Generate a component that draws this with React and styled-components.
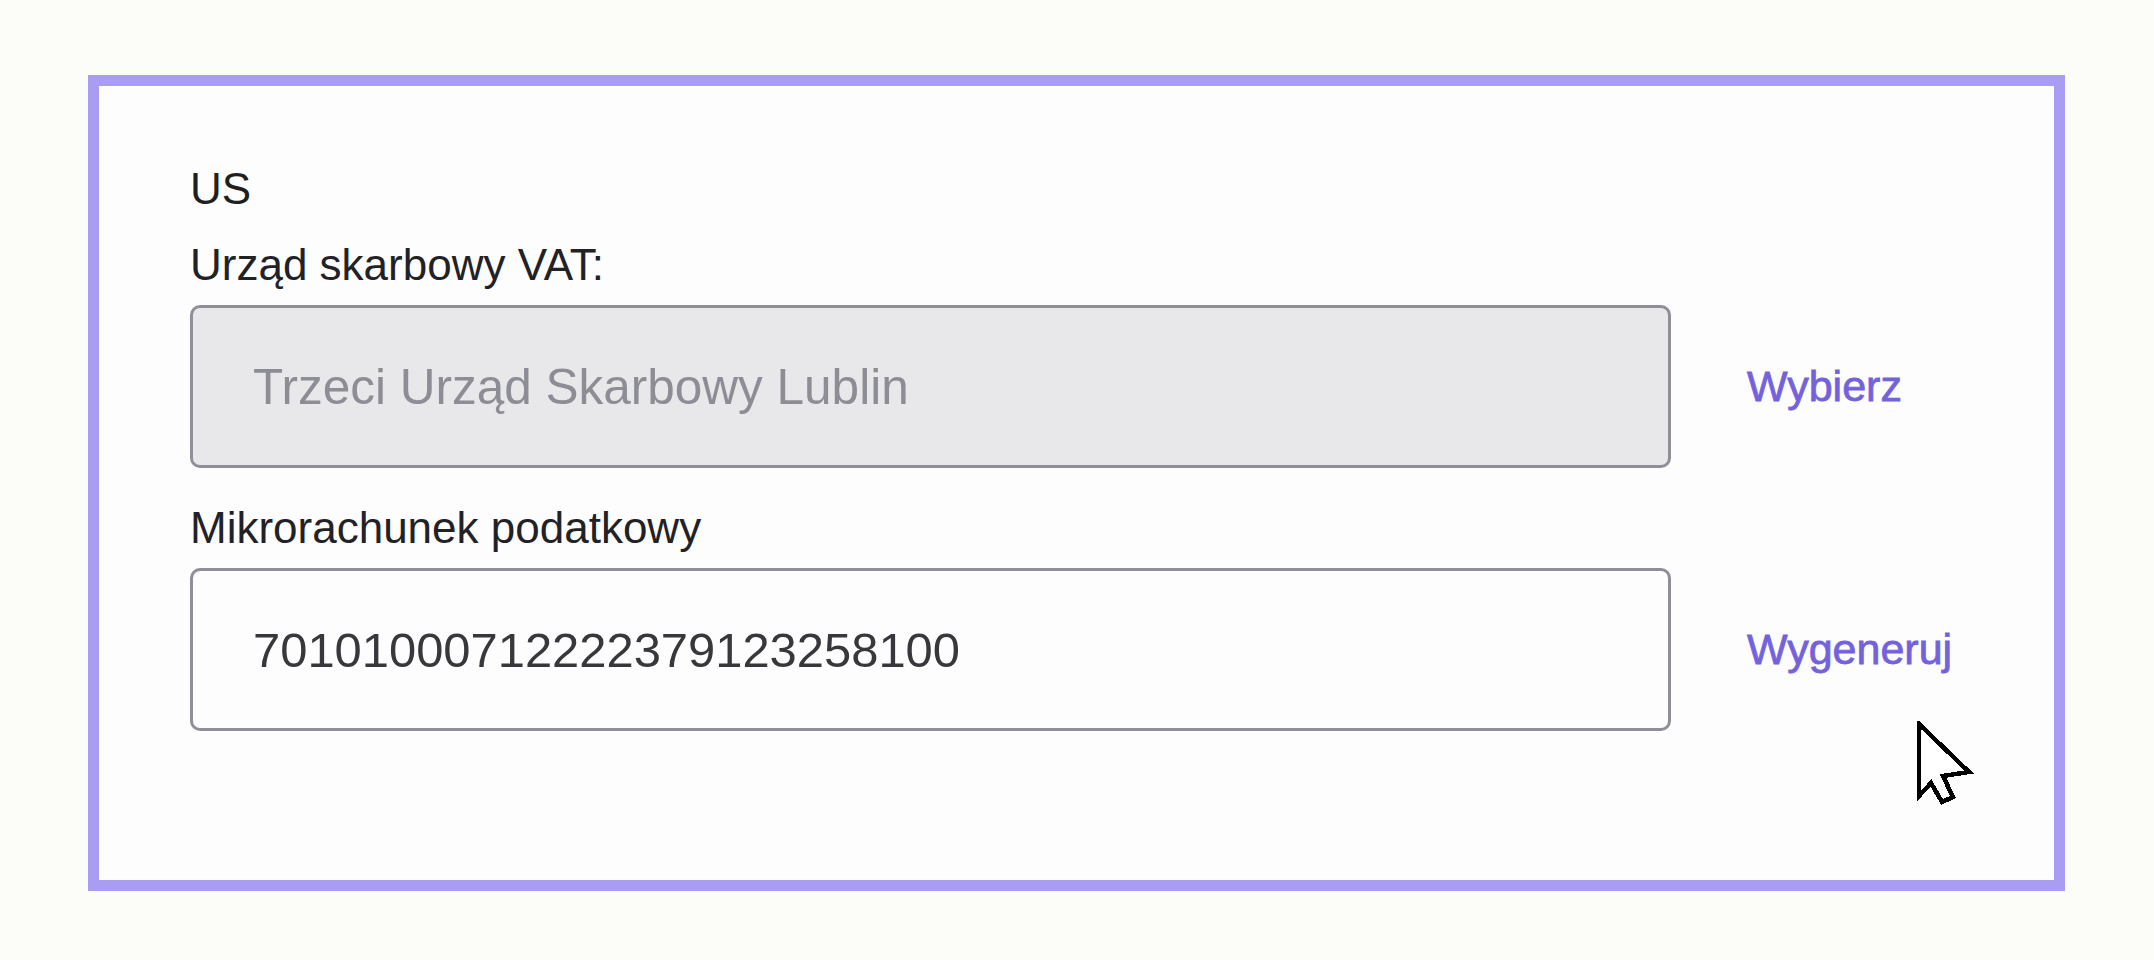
import React from 'react';
import styled, { createGlobalStyle } from 'styled-components';

const GlobalStyle = createGlobalStyle`
  body {
    margin: 0;
    background: #fcfcf9;
    font-family: 'Liberation Sans', Arial, sans-serif;
  }
`;

const Page = styled.div`
  padding: 75px 0 0 88px;
  min-height: 100vh;
  box-sizing: border-box;
`;

const Frame = styled.section`
  position: relative;
  width: 1977px;
  height: 816px;
  box-sizing: border-box;
  border: 11px solid #a99cf3;
  background: #fdfdfd;
  padding: 78px 0 0 91px;
`;

const Title = styled.h3`
  margin: 0 0 26px;
  font-size: 44px;
  line-height: 50px;
  font-weight: 400;
  color: #1f1f22;
`;

const Field = styled.div`
  margin-top: ${(p) => p.offset || 0}px;
`;

const Label = styled.div`
  font-size: 44px;
  line-height: 50px;
  color: #222226;
  margin-bottom: 15px;
`;

const Row = styled.div`
  display: flex;
  align-items: center;
`;

const InputBox = styled.div`
  width: 1481px;
  height: 163px;
  box-sizing: border-box;
  display: flex;
  align-items: center;
  padding-left: 60px;
  border: 3px solid #8f8f99;
  border-radius: 10px;
  background: ${(p) => (p.disabled ? '#e8e8ea' : '#fdfdfd')};
  color: ${(p) => (p.disabled ? '#8d8d95' : '#38383c')};
  font-size: ${(p) => (p.disabled ? 49.5 : 48.9)}px;
`;

const Action = styled.a`
  margin-left: 76px;
  font-size: 43px;
  font-weight: 400;
  -webkit-text-stroke: 0.8px #7462dd;
  color: #7462dd;
  text-decoration: none;
  cursor: pointer;
`;

const Cursor = styled.svg`
  position: absolute;
  left: 1817px;
  top: 635px;
`;

const App = () => (
  <Page>
    <GlobalStyle />
    <Frame>
      <Title>US</Title>
      <Field>
        <Label>Urząd skarbowy VAT:</Label>
        <Row>
          <InputBox disabled>Trzeci Urząd Skarbowy Lublin</InputBox>
          <Action>Wybierz</Action>
        </Row>
      </Field>
      <Field offset={35}>
        <Label>Mikrorachunek podatkowy</Label>
        <Row>
          <InputBox>70101000712222379123258100</InputBox>
          <Action>Wygeneruj</Action>
        </Row>
      </Field>
      <Cursor width="60" height="86" viewBox="0 0 60 86" shapeRendering="crispEdges">
        <path
          d="M3 3 L3 75 L15 62 L26 81 L37 76 L27 55 L53 51 Z"
          fill="#ffffff"
          stroke="#000000"
          strokeWidth="4.5"
          strokeLinejoin="miter"
        />
      </Cursor>
    </Frame>
  </Page>
);

export default App;
